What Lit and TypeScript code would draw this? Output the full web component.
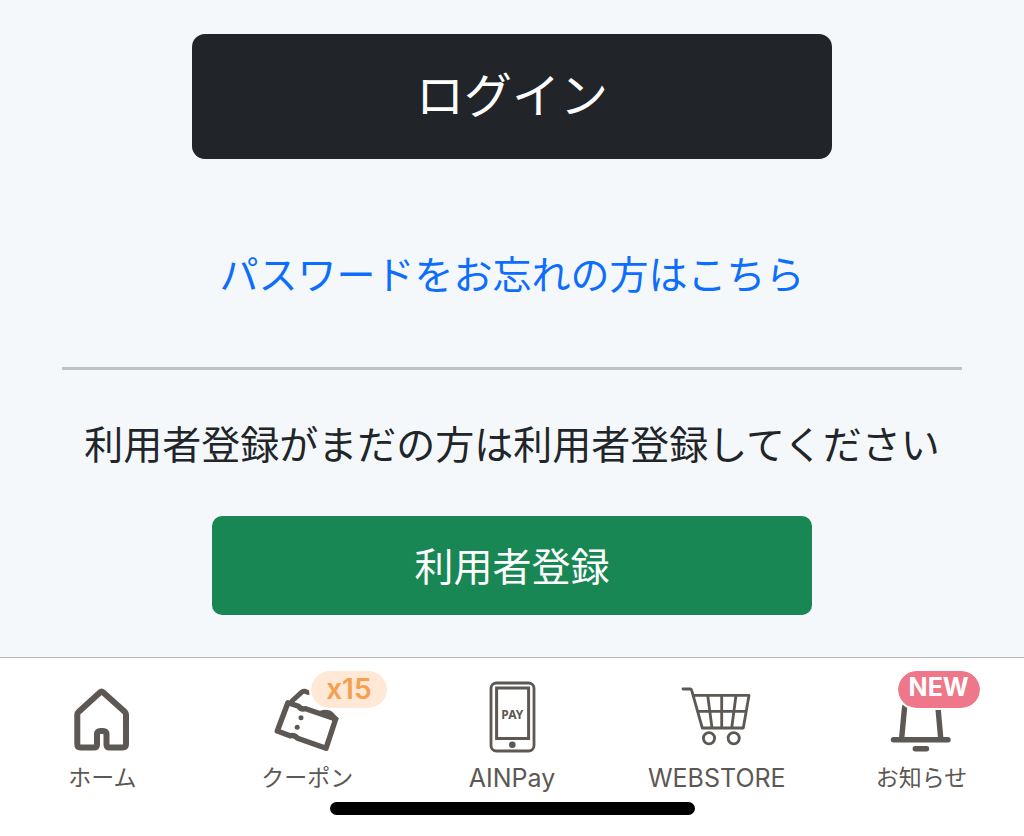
import { LitElement, html, css, svg, nothing } from "lit";
import { customElement, property } from "lit/decorators.js";

const icons = {
  home: svg`<path class="line" stroke-width="6" d="M38.5 77.5H52Q55 77.5 55 74.5V64.5Q55 61 58.5 61H61Q64.5 61 64.5 64.5V74.5Q64.5 77.5 67.5 77.5H80.5Q84 77.5 84 74V44.5Q84 43 83 42L61 22.3Q59.6 21 58.2 22.3L36.5 42Q35.3 43 35.3 44.5V74Q35.3 77.5 38.5 77.5Z"/>`,
  coupon: svg`
    <path class="line" stroke-width="5" d="M45 31L54.5 22.3Q56 20.8 58 21.3L61 22.5"/>
    <path class="fill" d="M72 41L78 39.5L83 40.5Q85 41 86.5 43L92 49L86 51Z"/>
    <path class="line" stroke-width="5.4" d="M40.9 32.7L51.6 36.3Q54 40 58.6 38.7L88.7 49L79 78.3L50.6 68.3Q47.6 64.5 43 65.8L30.3 61Z"/>
    <circle class="fill" cx="54" cy="47.7" r="2.5"/><circle class="fill" cx="50.2" cy="57.3" r="2.5"/>`,
  pay: svg`
    <rect class="line" stroke-width="2.8" x="39" y="13" width="43" height="68" rx="5.5"/>
    <rect class="line sharp" stroke-width="3" x="44.6" y="18" width="32" height="50.5"/>
    <circle class="fill" cx="60.3" cy="74.8" r="3.3"/>
    <text class="pay" x="60.3" y="48.5" text-anchor="middle">PAY</text>`,
  cart: svg`
    <path class="line" stroke-width="2.8" d="M26 19H33.2Q34.3 19 34.7 20.3L45.3 58H86.3L92 25.3H36.3M40.7 41.3H89M50.7 25.3L55 58M64.7 25.3V58M79 25.3L74.7 58"/>
    <circle class="line" stroke-width="2.8" cx="52" cy="68.3" r="5.6"/>
    <circle class="line" stroke-width="2.8" cx="76.7" cy="68.3" r="5.6"/>`,
  bell: svg`
    <path class="line sharp" stroke-width="5.4" d="M39.7 68L42.5 38Q46 24 59.3 24Q72.5 24 76 38L78.7 68"/>
    <path class="line" stroke-width="5.4" d="M31.5 69.7H86M53.3 78.8H64.5"/>`,
};

type IconName = keyof typeof icons;

@customElement("nav-item")
class NavItem extends LitElement {
  @property() icon: IconName = "home";
  @property() label = "";
  @property() badge = "";
  @property() tone = "";

  static styles = css`
    :host { display: block; flex: 1 1 0; min-width: 0; }
    .item {
      display: flex; flex-direction: column; align-items: center;
      color: #5d5853; text-decoration: none;
    }
    .picture { position: relative; width: 120px; height: 88px; }
    svg { display: block; width: 120px; height: 88px; }
    .line { fill: none; stroke: currentColor; stroke-linecap: round; stroke-linejoin: round; }
    .sharp { stroke-linecap: butt; stroke-linejoin: miter; }
    .fill { fill: currentColor; }
    .pay { font: 700 12px "Noto Sans", sans-serif; fill: currentColor; }
    .label { padding-top: 4px; font-size: 23px; line-height: 32px; white-space: nowrap; }
    .latin { font-size: 25px; }
    .badge {
      position: absolute; top: -1px; left: 62px;
      border: 2px solid #fff; border-radius: 22px; padding: 0 15px;
      font-size: 28px; line-height: 37px; font-weight: 600;
      background: #ffe8d6; background-clip: padding-box; color: #f6a04d;
    }
    .new {
      left: 34px; padding: 0 11px 4px;
      font-size: 25px; line-height: 33px; font-weight: 700;
      background-color: #ee778a; color: #fff;
    }
  `;

  render() {
    const latin = /^[A-Za-z]+$/.test(this.label) ? "latin" : "";
    return html`<a class="item" href="#">
      <span class="picture">
        <svg viewBox="0 0 120 88" aria-hidden="true">${icons[this.icon]}</svg>
        ${this.badge ? html`<span class="badge ${this.tone}">${this.badge}</span>` : nothing}
      </span>
      <span class="label ${latin}">${this.label}</span>
    </a>`;
  }
}

@customElement("app-root")
class AppRoot extends LitElement {
  static styles = css`
    :host {
      display: flex; flex-direction: column; min-height: 100vh;
      background: #f4f8fb; color: #212529;
      font-family: Inter, "Noto Sans CJK JP", sans-serif;
    }
    main {
      flex: 1; display: flex; flex-direction: column; align-items: center;
      padding: 34px 62px 42px; font-size: 39px; line-height: 58px;
    }
    button { border: 0; padding: 0; font: inherit; color: #fff; cursor: pointer; }
    .login {
      width: 71.2%; padding: 26px 0 27px; border-radius: 13px;
      font-size: 48px; line-height: 72px; background: #212529;
    }
    .forgot { margin-top: 87px; color: #0d6efd; text-decoration: none; }
    hr { width: 100%; height: 3px; margin: 63px 0 46px; border: 0; background: #bfc3c7; }
    p { margin: 0; text-align: center; }
    .register {
      width: 66.6%; margin-top: 42px; padding: 22px 0 19px;
      border-radius: 10px; background: #198754;
    }
    nav { background: #fff; border-top: 1px solid #b3b7ba; padding: 12px 0 21px; }
    .items { display: flex; }
    .bar { width: 365px; height: 13px; margin: 8px auto 0; border-radius: 7px; background: #000; }
  `;

  render() {
    return html`
      <main>
        <button class="login" type="button">ログイン</button>
        <a class="forgot" href="#">パスワードをお忘れの方はこちら</a>
        <hr />
        <p>利用者登録がまだの方は利用者登録してください</p>
        <button class="register" type="button">利用者登録</button>
      </main>
      <nav>
        <div class="items">
          <nav-item icon="home" label="ホーム"></nav-item>
          <nav-item icon="coupon" label="クーポン" badge="x15"></nav-item>
          <nav-item icon="pay" label="AINPay"></nav-item>
          <nav-item icon="cart" label="WEBSTORE"></nav-item>
          <nav-item icon="bell" label="お知らせ" badge="NEW" tone="new"></nav-item>
        </div>
        <div class="bar"></div>
      </nav>
    `;
  }
}
